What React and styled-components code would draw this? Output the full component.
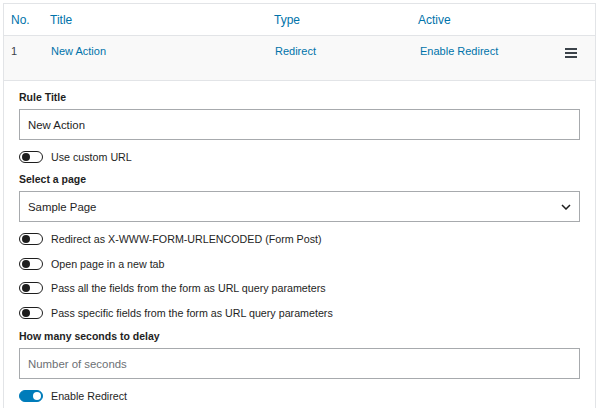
import React from 'react';
import styled, { createGlobalStyle } from 'styled-components';

const GlobalStyle = createGlobalStyle`
  body {
    margin: 0;
    background: #ffffff;
    font-family: "Liberation Sans", Arial, sans-serif;
    color: #1e1e1e;
  }
`;

const Page = styled.div`
  padding: 3px 4px 0 3px;
`;

const Table = styled.div`
  border: 1px solid #e2e4e7;
  border-bottom: none;
  height: 405px;
  overflow: hidden;
`;

const Row = styled.div`
  display: grid;
  grid-template-columns: 39px 224px 144px 1fr 30px;
  align-items: ${({ head }) => (head ? 'center' : 'start')};
  height: ${({ head }) => (head ? '32px' : '45px')};
  padding-top: ${({ head }) => (head ? '0' : '8px')};
  box-sizing: border-box;
  background: ${({ head }) => (head ? '#ffffff' : '#f9f9f9')};
  border-bottom: 1px solid #e2e4e7;
  padding-left: 7px;
  font-size: 11px;
`;

const Cell = styled.div`
  color: ${({ plain }) => (plain ? '#3c434a' : '#0073aa')};
  font-size: ${({ head }) => (head ? '12px' : '11px')};
  line-height: 14px;
  padding-left: ${({ shift }) => shift || 0}px;
`;

const Menu = styled.div`
  display: flex;
  flex-direction: column;
  gap: 2px;
  width: 12px;
  margin-top: 4px;
  span {
    display: block;
    height: 2px;
    background: #3c434a;
  }
`;

const Form = styled.div`
  padding: 10px 15px 0 15px;
  display: flex;
  flex-direction: column;
`;

const Label = styled.div`
  font-size: 10.5px;
  font-weight: bold;
  color: #1e1e1e;
  margin-bottom: 5px;
  line-height: 13px;
`;

const Field = styled.div`
  height: 31px;
  box-sizing: border-box;
  border: 1px solid #a7aaad;
  display: flex;
  align-items: center;
  justify-content: space-between;
  padding: 0 8px;
  font-size: 11.4px;
  color: ${({ placeholder }) => (placeholder ? '#6c7075' : '#1e1e1e')};
  margin-bottom: ${({ mb }) => mb || 0}px;
`;

const ToggleRow = styled.div`
  display: flex;
  align-items: center;
  height: 13px;
  gap: 8px;
  font-size: 10.7px;
  color: #1e1e1e;
  margin-bottom: ${({ mb }) => (mb === undefined ? 12 : mb)}px;
`;

const Track = styled.span`
  width: 22px;
  height: 10px;
  border-radius: 7px;
  border: 1px solid ${({ on }) => (on ? '#007cba' : '#1e1e1e')};
  background: ${({ on }) => (on ? '#007cba' : '#ffffff')};
  position: relative;
  flex: none;
  &::after {
    content: '';
    position: absolute;
    top: 1px;
    left: ${({ on }) => (on ? '13px' : '2px')};
    width: 8px;
    height: 8px;
    border-radius: 50%;
    background: ${({ on }) => (on ? '#ffffff' : '#1e1e1e')};
  }
`;

const Toggle = ({ on, children, mb }) => (
  <ToggleRow mb={mb}>
    <Track on={on} />
    {children}
  </ToggleRow>
);

const Chevron = () => (
  <svg width="10" height="6" viewBox="0 0 10 6">
    <path d="M1 1l4 4 4-4" fill="none" stroke="#1e1e1e" strokeWidth="1.5" />
  </svg>
);

export default function App() {
  return (
    <>
      <GlobalStyle />
      <Page>
        <Table>
          <Row head>
            <Cell head>No.</Cell>
            <Cell head>Title</Cell>
            <Cell head>Type</Cell>
            <Cell head>Active</Cell>
            <div />
          </Row>
          <Row>
            <Cell plain>1</Cell>
            <Cell shift={1}>New Action</Cell>
            <Cell shift={1}>Redirect</Cell>
            <Cell shift={2}>Enable Redirect</Cell>
            <Menu>
              <span />
              <span />
              <span />
            </Menu>
          </Row>
          <Form>
            <Label>Rule Title</Label>
            <Field mb={10}>New Action</Field>
            <Toggle mb={10}>Use custom URL</Toggle>
            <Label>Select a page</Label>
            <Field mb={10}>
              Sample Page
              <Chevron />
            </Field>
            <Toggle>Redirect as X-WWW-FORM-URLENCODED (Form Post)</Toggle>
            <Toggle mb={11}>Open page in a new tab</Toggle>
            <Toggle>Pass all the fields from the form as URL query parameters</Toggle>
            <Toggle mb={11}>Pass specific fields from the form as URL query parameters</Toggle>
            <Label>How many seconds to delay</Label>
            <Field placeholder="1" mb={10}>Number of seconds</Field>
            <Toggle on>Enable Redirect</Toggle>
          </Form>
        </Table>
      </Page>
    </>
  );
}
